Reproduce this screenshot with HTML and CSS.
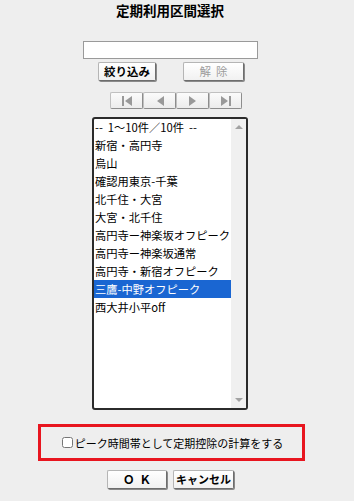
FILE: index.html
```html
<!DOCTYPE html>
<html lang="ja">
<head>
    <meta charset="UTF-8">
    <title>定期利用区間選択</title>
    <link rel="stylesheet" href="styles.css">
</head>
<body>
    <h1 class="title">定期利用区間選択</h1>
    <div class="filter">
        <input type="text" class="filter-input">
        <div class="filter-buttons">
            <button type="button" class="btn">絞り込み</button>
            <button type="button" class="btn" disabled>解&nbsp;&nbsp;除</button>
        </div>
    </div>
    <div class="pager">
        <button type="button" class="pager-btn" disabled>
            <svg width="12" height="10" viewBox="0 0 12 10"><rect x="1" y="0" width="2" height="10" fill="#999"/><polygon points="11,0 11,10 4,5" fill="#999"/></svg>
        </button>
        <button type="button" class="pager-btn" disabled>
            <svg width="12" height="10" viewBox="0 0 12 10"><polygon points="10,0 10,10 3,5" fill="#999"/></svg>
        </button>
        <button type="button" class="pager-btn" disabled>
            <svg width="12" height="10" viewBox="0 0 12 10"><polygon points="2,0 2,10 9,5" fill="#999"/></svg>
        </button>
        <button type="button" class="pager-btn" disabled>
            <svg width="12" height="10" viewBox="0 0 12 10"><polygon points="1,0 1,10 8,5" fill="#999"/><rect x="9" y="0" width="2" height="10" fill="#999"/></svg>
        </button>
    </div>
    <div class="listbox">
        <ul class="list">
            <li>--&nbsp;&nbsp;1〜10件／10件&nbsp;&nbsp;--</li>
            <li>新宿・高円寺</li>
            <li>烏山</li>
            <li>確認用東京-千葉</li>
            <li>北千住・大宮</li>
            <li>大宮・北千住</li>
            <li>高円寺ー神楽坂オフピーク</li>
            <li>高円寺ー神楽坂通常</li>
            <li>高円寺・新宿オフピーク</li>
            <li class="selected">三鷹-中野オフピーク</li>
            <li>西大井小平off</li>
        </ul>
        <div class="scrollbar">
            <span class="arrow-up"></span>
            <span class="arrow-down"></span>
        </div>
    </div>
    <div class="peak">
        <label><input type="checkbox" class="peak-check">ピーク時間帯として定期控除の計算をする</label>
    </div>
    <div class="actions">
        <button type="button" class="btn btn-ok">Ｏ&nbsp;&nbsp;Ｋ</button>
        <button type="button" class="btn btn-cancel">キャンセル</button>
    </div>
</body>
</html>
```

FILE: styles.css
```css
* {
    margin: 0;
    padding: 0;
    box-sizing: border-box;
}

body {
    background-color: #eeeeee;
    font-family: "Noto Sans CJK JP", "Liberation Sans", sans-serif;
    font-size: 12px;
    color: #000;
    width: 340px;
    height: 501px;
}

.title {
    font-size: 13.5px;
    font-weight: bold;
    text-align: center;
    height: 41px;
    line-height: 20px;
}

.filter {
    display: flex;
    flex-direction: column;
    align-items: center;
}

.filter-input {
    width: 175px;
    height: 18px;
    border: 1px solid #9a9a9a;
    background: #fff;
}

.filter-buttons {
    display: flex;
    gap: 27px;
    margin-top: 3px;
    margin-left: 2px;
}

.btn {
    height: 19px;
    min-width: 58px;
    font-family: "Noto Sans CJK JP", sans-serif;
    font-size: 11.5px;
    font-weight: bold;
    line-height: 15px;
    padding: 0 3px;
    white-space: nowrap;
    background: linear-gradient(#ffffff, #f1f1f1);
    border: 1px solid #b5b5b5;
    border-right-color: #6d6d6d;
    border-bottom-color: #6d6d6d;
    border-radius: 2px;
    box-shadow: 1px 1px 0 #8a8a8a;
    color: #000;
}

.btn:disabled {
    color: #9c9c9c;
    min-width: 61px;
    font-weight: normal;
}

.pager {
    display: flex;
    justify-content: center;
    margin-top: 11px;
    margin-left: 12px;
}

.pager-btn {
    width: 33px;
    height: 17px;
    display: flex;
    align-items: center;
    justify-content: center;
    background: linear-gradient(#fbfbfb, #ececec);
    border: 1px solid #c0c0c0;
    border-right-color: #8d8d8d;
    border-bottom-color: #8d8d8d;
    border-radius: 2px;
}

.listbox {
    display: flex;
    width: 156px;
    height: 293px;
    margin: 8px auto 0;
    border: 2px solid #2b2b2b;
    border-radius: 3px;
    background: #fff;
}

.list {
    list-style: none;
    flex: 1;
}

.list li {
    height: 18px;
    line-height: 18px;
    padding-left: 1px;
    white-space: nowrap;
    font-size: 11.25px;
}

.list li:first-child {
    height: 17px;
    line-height: 17px;
}

.list li.selected {
    background: #1a66d2;
    color: #fff;
}

.scrollbar {
    width: 15px;
    background: #f0f0f0;
    display: flex;
    flex-direction: column;
    justify-content: space-between;
    align-items: center;
    padding: 6px 0;
}

.arrow-up {
    border-left: 4px solid transparent;
    border-right: 4px solid transparent;
    border-bottom: 4px solid #a3a3a3;
}

.arrow-down {
    border-left: 4px solid transparent;
    border-right: 4px solid transparent;
    border-top: 4px solid #a3a3a3;
}

.peak {
    width: 267px;
    height: 37px;
    margin: 14px 0 0 38px;
    border: 3px solid #e8151f;
    display: flex;
    align-items: center;
    justify-content: center;
}

.peak label {
    display: flex;
    align-items: center;
    font-size: 11px;
    margin-left: 2px;
}

.peak-check {
    width: 11px;
    height: 11px;
    margin-right: 2px;
}

.actions {
    display: flex;
    justify-content: center;
    gap: 6px;
    margin-top: 9px;
    margin-left: 1px;
}

.btn-ok {
    width: 60px;
}

.btn-cancel {
    width: 61px;
    padding: 0 1px;
    font-size: 11px;
}
```
